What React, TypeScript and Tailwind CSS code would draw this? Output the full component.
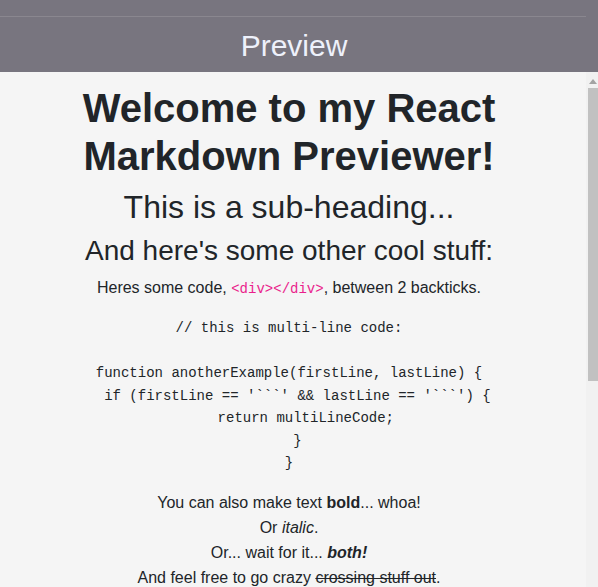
const codeBlock = `// this is multi-line code:

function anotherExample(firstLine, lastLine) {
  if (firstLine == '\`\`\`' && lastLine == '\`\`\`') {
    return multiLineCode;
  }
}`;

function Header() {
  return (
    <header className="h-[72px] shrink-0 bg-[#78757f]">
      <div className="mr-[12px] h-[17px] border-b border-[#8a878f]" />
      <h2 className="pr-[10px] pt-[3px] text-center text-[30px] leading-[52px] text-[#eef1fb]">
        Preview
      </h2>
    </header>
  );
}

function ScrollTrack() {
  return (
    <div className="flex w-[12px] shrink-0 flex-col bg-[#f1f1f1]">
      <div className="flex h-[16px] items-center justify-center pl-[2px] pt-[2px]">
        <svg width="8" height="5" viewBox="0 0 8 5" className="block">
          <path d="M0 5 L4 0 L8 5Z" fill="#a3a3a3" />
        </svg>
      </div>
      <div className="ml-[2px] h-[293px] bg-[#c1c1c1]" />
    </div>
  );
}

function Preview() {
  return (
    <div className="flex min-h-0 flex-1">
      <div className="min-w-0 flex-1 overflow-hidden bg-[#f5f5f5] pl-[4px] pr-[12px] pt-[12px] text-center text-[#212529]">
        <h1 className="mb-2 text-[40px] font-bold leading-[48px]">
          Welcome to my React Markdown Previewer!
        </h1>
        <h2 className="mb-2 text-[32px] leading-[38.4px]">This is a sub-heading...</h2>
        <h3 className="mb-2 text-[28px] leading-[33.6px]">And here's some other cool stuff:</h3>
        <p className="mb-4 text-base leading-6">
          Heres some code,{' '}
          <code className="font-['Liberation_Mono',monospace] text-[14px] text-[#ea1f8c]">
            {'<div></div>'}
          </code>
          , between 2 backticks.
        </p>
        <pre className="mb-[15px] whitespace-pre font-['Liberation_Mono',monospace] text-[14px] leading-[22.5px] text-[#212529]">
          <code>{codeBlock}</code>
        </pre>
        <p className="text-base leading-[25.3px]">
          You can also make text <strong className="font-bold">bold</strong>... whoa!
          <br />
          Or <em>italic</em>.
          <br />
          Or... wait for it... <strong className="font-bold italic">both!</strong>
          <br />
          And feel free to go crazy <del>crossing stuff out</del>.
        </p>
        <p className="mt-4 text-base leading-6">
          There's also <a className="text-[#007bff]">links</a>, and
        </p>
      </div>
      <ScrollTrack />
    </div>
  );
}

export default function App() {
  return (
    <div className="flex h-screen flex-col font-['Liberation_Sans',Arial,sans-serif]">
      <Header />
      <Preview />
    </div>
  );
}
